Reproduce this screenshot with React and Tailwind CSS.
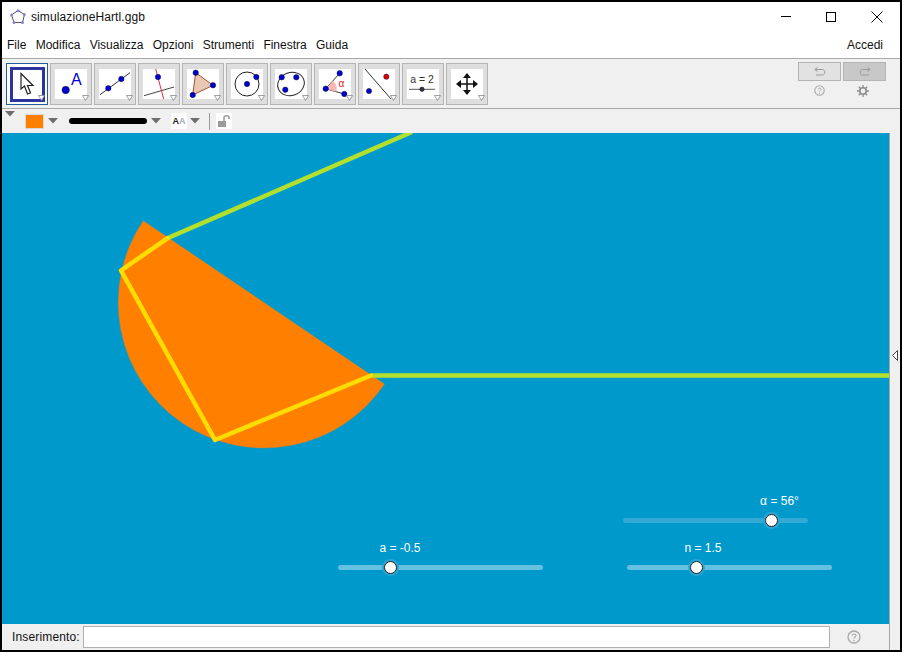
import React from 'react';

const Caret = () => (
    <svg width="10" height="6" viewBox="0 0 10 6"><path d="M0 0H10L5 5.5Z" fill="#6e6e6e" /></svg>
);

const dot = (cx, cy, r = 2.7, fill = '#0000d0') => <circle cx={cx} cy={cy} r={r} fill={fill} stroke="#0a0a3c" strokeWidth="0.5" />;

const toolIcons = [
    <g key="move"><path d="M10 5.500V21L13.500 18L16.500 26L19.500 25L16.500 17.500H22Z" fill="#fff" stroke="#222" strokeWidth="1.200" /></g>,
    <g key="point">{dot(10.7, 21, 3.700)}<text x="16" y="16" fontSize="16" fontFamily="Liberation Sans" fontWeight="500" fill="#0000e0">A</text></g>,
    <g key="line"><path d="M1 25.700L31 3.700" stroke="#333" strokeWidth="1" />{dot(9.3, 19.3)}{dot(22.3, 10)}</g>,
    <g key="perp"><path d="M1 26.700L31 18" stroke="#444" strokeWidth="1" /><path d="M12.700 0L20.700 30" stroke="#e03040" strokeWidth="1" />{dot(15, 8)}</g>,
    <g key="poly"><path d="M8.700 3.700L26 16.300L5.700 26Z" fill="#e8c8b4" stroke="#a0522d" strokeWidth="1" />{dot(8.7, 3.7)}{dot(26, 16.3)}{dot(5.7, 26)}</g>,
    <g key="circle"><circle cx="16" cy="15" r="12" fill="none" stroke="#222" strokeWidth="1" />{dot(16, 15)}{dot(25.3, 8)}</g>,
    <g key="conic"><ellipse cx="16" cy="15" rx="13.500" ry="11.500" transform="rotate(-20 16 15)" fill="none" stroke="#222" strokeWidth="1" />{dot(6.7, 8.3)}{dot(21.3, 8.3)}{dot(10.3, 20.7)}</g>,
    <g key="angle"><path d="M6.700 19.700L20.700 4.300M6.700 19.700L25.300 25" stroke="#333" strokeWidth="1" fill="none" /><path d="M6.700 19.700L14 11.700A11 11 0 0 1 17.300 22.700Z" fill="#f8b8b8" />{dot(6.7, 19.7)}{dot(20.7, 4.3)}{dot(25.3, 25)}<text x="19.500" y="18" fontSize="10" fontFamily="Liberation Sans" fill="#e02020">α</text></g>,
    <g key="reflect"><path d="M2 0L28 30" stroke="#333" strokeWidth="1" />{dot(23.3, 7.7, 2.600, '#e00000')}{dot(6, 22, 2.600)}</g>,
    <g key="slider"><text x="15" y="14" textAnchor="middle" fontSize="10.500" fontFamily="Liberation Sans" fill="#333">a = 2</text><path d="M2 20.300H28" stroke="#555" strokeWidth="1" />{dot(15, 20.3, 2.200, '#333')}</g>,
    <g key="pan"><path d="M16 15V6M16 15V24M16 15H7M16 15H25" stroke="#111" strokeWidth="1.500" /><path d="M16 4L20 9H12ZM16 26L20 21H12ZM5 15L10 11V19ZM27 15L22 11V19Z" fill="#111" /></g>,
];

const ToolButton = ({ children, selected }) => (
    <div className={`relative w-[42px] h-[42px] flex items-center justify-center ${selected ? 'bg-white border border-[#1f5f9f]' : 'bg-[#dedede] border border-[#b4b4b4]'}`}>
        <div className={selected ? 'w-[35px] h-[35px] bg-white border-[3px] border-[#2c34a0] flex items-center justify-center' : 'w-[32px] h-[30px] bg-white overflow-hidden'}>
            <svg width="32" height="32" viewBox="0 0 32 32" className="shrink-0">{children}</svg>
        </div>
        <svg width="7" height="6" viewBox="0 0 7 6" className="absolute right-[2px] bottom-[3px]"><path d="M0.500 0.500H6.500L3.500 5.500Z" fill="#fff" stroke="#888" strokeWidth="0.800" /></svg>
    </div>
);

const HelpIcon = ({ size = 12, color = '#a8a8a8' }) => (
    <svg width={size} height={size} viewBox="0 0 14 14">
        <circle cx="7" cy="7" r="6" fill="none" stroke={color} strokeWidth="1.300" />
        <path d="M5 5.500C5 3.500 9 3.500 9 5.500C9 7 7 7 7 8.500" fill="none" stroke={color} strokeWidth="1.200" />
        <circle cx="7" cy="10.500" r="0.800" fill={color} />
    </svg>
);

const Slider = ({ left, top, width, thumb, label, labelX, faded }) => (
    <>
        <div
            className="absolute text-white text-[12px] leading-[14px] -translate-x-1/2 whitespace-nowrap"
            style={{ left: labelX, top: top - 24 }}
        >
            {label}
        </div>
        <div
            className={`absolute h-[5px] rounded-full ${faded ? 'bg-[#33aad6]' : 'bg-[#66c0e0]'}`}
            style={{ left, top: top, width }}
        />
        <div
            className="absolute w-[17px] h-[17px] rounded-full bg-[#2ba5d3] flex items-center justify-center"
            style={{ left: thumb - 8.5, top: top - 6 }}
        >
            <div className="w-[13px] h-[13px] rounded-full bg-white border border-[#222]" />
        </div>
    </>
);

const App = () => {
    return (
        <div className="w-[902px] h-[652px] bg-black p-[2px] overflow-hidden font-['Liberation_Sans',sans-serif] text-[#111]">
            <div className="w-full h-full bg-white flex flex-col">
                {/* title bar */}
                <div className="h-[29px] flex items-center shrink-0">
                    <svg width="16" height="16" viewBox="0 0 16 16" className="ml-[8px]">
                        <path d="M8 1.500L14.500 5.500L12.500 13.500H4L1.500 6Z" fill="none" stroke="#555" strokeWidth="1" />
                        <circle cx="8" cy="1.800" r="1.500" fill="#8a80d8" /><circle cx="14.300" cy="5.500" r="1.500" fill="#8a80d8" />
                        <circle cx="12.500" cy="13.500" r="1.500" fill="#8a80d8" /><circle cx="4" cy="13.500" r="1.500" fill="#8a80d8" /><circle cx="1.700" cy="6" r="1.500" fill="#8a80d8" />
                    </svg>
                    <span className="ml-[5px] text-[12px] leading-none tracking-[0.1px]">simulazioneHartl.ggb</span>
                    <div className="ml-auto flex items-center mr-[17px] gap-[35px]">
                        <div className="w-[10px] h-px bg-black" />
                        <div className="w-[10px] h-[10px] border border-black" />
                        <svg width="12" height="12" viewBox="0 0 12 12"><path d="M0.500 0.500L11.500 11.500M11.500 0.500L0.500 11.500" stroke="#111" strokeWidth="1" /></svg>
                    </div>
                </div>

                {/* menu */}
                <div className="h-[28px] flex items-center justify-between shrink-0 border-b border-[#a8a8a8] pl-[5px] pr-[17px] text-[12px]">
                    <div className="flex gap-[9.3px]">
                        <span>File</span>
                        <span>Modifica</span>
                        <span>Visualizza</span>
                        <span>Opzioni</span>
                        <span>Strumenti</span>
                        <span>Finestra</span>
                        <span>Guida</span>
                    </div>
                    <span>Accedi</span>
                </div>

                {/* toolbar */}
                <div className="h-[50px] bg-[#f0f0f0] border-b border-[#a8a8a8] flex shrink-0 pl-[4px] pt-[4px]">
                    <div className="flex gap-[2px]">
                        {toolIcons.map((icon, i) => (
                            <ToolButton key={i} selected={i === 0}>{icon}</ToolButton>
                        ))}
                    </div>
                    <div className="ml-auto mr-[14px] w-[88px] flex flex-col mt-[-1px]">
                        <div className="flex gap-[2px]">
                            <div className="w-[43px] h-[19px] border border-[#b4b4b4] bg-[#e2e2e2] flex items-center justify-center">
                                <svg width="12" height="9" viewBox="0 0 12 9"><path d="M3.500 0.500L0.800 2.500L3.500 4.500M1 2.500H8.500C11.500 2.500 11.500 8 8.500 8H2" fill="none" stroke="#9a9a9a" strokeWidth="1" /></svg>
                            </div>
                            <div className="w-[43px] h-[19px] border border-[#b4b4b4] bg-[#c8c8c8] flex items-center justify-center">
                                <svg width="12" height="9" viewBox="0 0 12 9"><path d="M8.500 0.500L11.200 2.500L8.500 4.500M11 2.500H3.500C0.500 2.500 0.500 8 3.500 8H10" fill="none" stroke="#9a9a9a" strokeWidth="1" /></svg>
                            </div>
                        </div>
                        <div className="flex mt-[4px]">
                            <div className="w-[43px] flex justify-center"><HelpIcon size={11} /></div>
                            <div className="w-[47px] flex justify-center">
                                <svg width="12" height="12" viewBox="0 0 12 12">
                                    <circle cx="6" cy="6" r="3.200" fill="none" stroke="#8c8c8c" strokeWidth="1.600" />
                                    <path d="M6 0V2.500M6 9.500V12M0 6H2.500M9.500 6H12M1.800 1.800L3.500 3.500M8.500 8.500L10.200 10.200M10.200 1.800L8.500 3.500M3.500 8.500L1.800 10.200" stroke="#8c8c8c" strokeWidth="1.300" />
                                </svg>
                            </div>
                        </div>
                    </div>
                </div>

                {/* style bar */}
                <div className="h-[24px] bg-[#f0f0f0] flex items-center shrink-0">
                    <div className="ml-[3px] mb-[14px]"><Caret /></div>
                    <div className="ml-[10px] w-[19px] h-[15px] bg-[#ff8000] border border-[#d8d8d8]" />
                    <div className="ml-[4px]"><Caret /></div>
                    <div className="ml-[11px] w-[78px] h-[6px] rounded-full bg-black" />
                    <div className="ml-[4px]"><Caret /></div>
                    <div className="ml-[10px] w-[16px] h-[16px] bg-white flex items-center justify-center text-[9px] font-bold leading-none">
                        <span className="text-[#222]">A</span><span className="text-[#aaa]">A</span>
                    </div>
                    <div className="ml-[3px]"><Caret /></div>
                    <div className="ml-[9px] w-px h-[17px] bg-[#9c9c9c]" />
                    <div className="ml-[6px] w-[16px] h-[16px] bg-white flex items-center justify-center">
                        <svg width="14" height="14" viewBox="0 0 14 14"><rect x="1" y="7" width="8" height="6" fill="#9a9a9a" /><path d="M7 7V3.500C7 1 12 1 12 3.500V5" fill="none" stroke="#9a9a9a" strokeWidth="1.500" /></svg>
                    </div>
                </div>

                {/* graphics view + side strip */}
                <div className="flex-1 flex min-h-0">
                    <div className="relative w-[887px] bg-[#0099cc] overflow-hidden">
                        <svg width="887" height="491" viewBox="2 133 887 491" className="absolute inset-0">
                            <path d="M143.300 220.700A145.600 145.600 0 0 0 384.500 384Z" fill="#ff8000" />
                            <path d="M143.300 220.700A145.600 145.600 0 0 0 384.500 384" fill="none" stroke="#c08040" strokeOpacity="0.500" strokeWidth="1" />
                            <path d="M412 132L167.300 238.300M371 375.500H889" fill="none" stroke="#b2e02c" strokeWidth="4.500" />
                            <path d="M167.300 238.300L121 270.500L215 440L371 375.500" fill="none" stroke="#ffdd00" strokeWidth="4.500" strokeLinejoin="round" strokeLinecap="round" />
                        </svg>
                        <Slider left={336} top={431.5} width={205} thumb={388.5} label="a = -0.5" labelX={398} />
                        <Slider left={621} top={385} width={185} thumb={769} label="α = 56°" labelX={777.5} faded />
                        <Slider left={625} top={431.5} width={205} thumb={694} label="n = 1.5" labelX={701} />
                    </div>
                    <div className="flex-1 bg-[#f0f0f0] border-l border-[#a8a8a8] flex items-center justify-center pr-[1px]">
                        <svg width="6" height="11" viewBox="0 0 6 11" className="mt-[-47px]"><path d="M5.500 0.500V10.500L0.500 5.500Z" fill="#fff" stroke="#444" strokeWidth="1" /></svg>
                    </div>
                </div>

                {/* input bar */}
                <div className="h-[26px] bg-[#f0f0f0] flex items-center shrink-0 text-[12px] pl-[10px]">
                    <span className="w-[71px] tracking-[0.15px] whitespace-nowrap">Inserimento:</span>
                    <div className="w-[747px] h-[22px] bg-white border border-[#b0b0b0]" />
                    <div className="ml-[17px]"><HelpIcon size={14} /></div>
                    <div className="ml-auto w-px h-full bg-[#a8a8a8] mr-[10px]" />
                </div>
            </div>
        </div>
    );
};

export default App;
